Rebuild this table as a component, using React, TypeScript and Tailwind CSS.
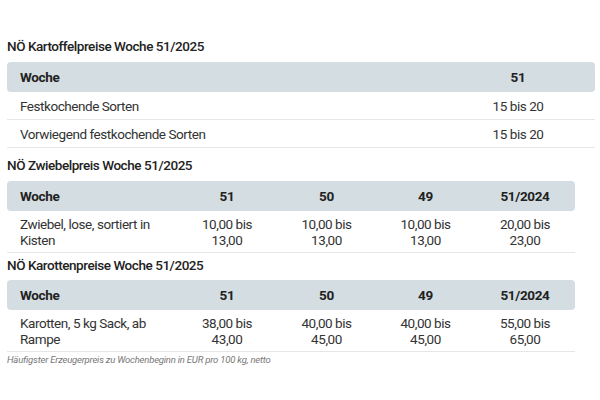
import React from 'react';

type Table = {
  title: string;
  cols: string[];
  rows: string[][];
  wide?: boolean;
  wrap: string;
  pad: string;
};

const tables: Table[] = [
  {
    title: 'NÖ Kartoffelpreise Woche 51/2025',
    cols: ['Woche', '51'],
    rows: [
      ['Festkochende Sorten', '15 bis 20'],
      ['Vorwiegend festkochende Sorten', '15 bis 20'],
    ],
    wide: true,
    wrap: '',
    pad: 'pb-[6px]',
  },
  {
    title: 'NÖ Zwiebelpreis Woche 51/2025',
    cols: ['Woche', '51', '50', '49', '51/2024'],
    rows: [['Zwiebel, lose, sortiert in Kisten', '10,00 bis 13,00', '10,00 bis 13,00', '10,00 bis 13,00', '20,00 bis 23,00']],
    wrap: 'mt-[7px]',
    pad: 'pb-[6px]',
  },
  {
    title: 'NÖ Karottenpreise Woche 51/2025',
    cols: ['Woche', '51', '50', '49', '51/2024'],
    rows: [['Karotten, 5 kg Sack, ab Rampe', '38,00 bis 43,00', '40,00 bis 45,00', '40,00 bis 45,00', '55,00 bis 65,00']],
    wrap: 'mt-[2px]',
    pad: 'pb-[5px]',
  },
];

const PriceTable = ({ t }: { t: Table }) => {
  const grid = t.wide ? 'grid-cols-[434px_154px]' : 'grid-cols-[170px_100px_99px_99px_100px]';
  return (
    <div className={t.wrap}>
      <h3 className={`text-[13.5px] tracking-[-0.45px] font-medium text-[#222] leading-[20px] ${t.pad}`}>{t.title}</h3>
      <div className={t.wide ? 'w-[588px]' : 'w-[568px]'}>
        <div className={`grid ${grid} bg-[#d4dde1] rounded-[4px] h-[30px] items-center font-bold text-[13.5px] tracking-[-0.35px] text-[#222]`}>
          {t.cols.map((c, i) => (
            <div key={i} className={i === 0 ? 'pl-[13px]' : 'text-center'}>
              {c}
            </div>
          ))}
        </div>
        {t.rows.map((r, ri) => (
          <div
            key={ri}
            className={`grid ${grid} items-center border-b border-[#e6e6e6] text-[13.5px] tracking-[-0.45px] text-[#333] leading-[16px] ${
              t.wide ? 'h-[28px]' : 'h-[42px]'
            }`}
          >
            {r.map((c, i) => (
              <div key={i} className={i === 0 ? 'pl-[13px] pr-[20px]' : 'text-center px-[24px]'}>
                {c}
              </div>
            ))}
          </div>
        ))}
      </div>
    </div>
  );
};

export default function App() {
  return (
    <div className="w-[600px] h-[400px] bg-white font-['Roboto',sans-serif] pl-[7px] pt-[36px] flex flex-col">
      {tables.map((t, i) => (
        <PriceTable key={i} t={t} />
      ))}
      <p className="text-[9.5px] tracking-[-0.2px] italic text-[#777] mt-[1px] leading-[13px]">
        Häufigster Erzeugerpreis zu Wochenbeginn in EUR pro 100 kg, netto
      </p>
    </div>
  );
}
